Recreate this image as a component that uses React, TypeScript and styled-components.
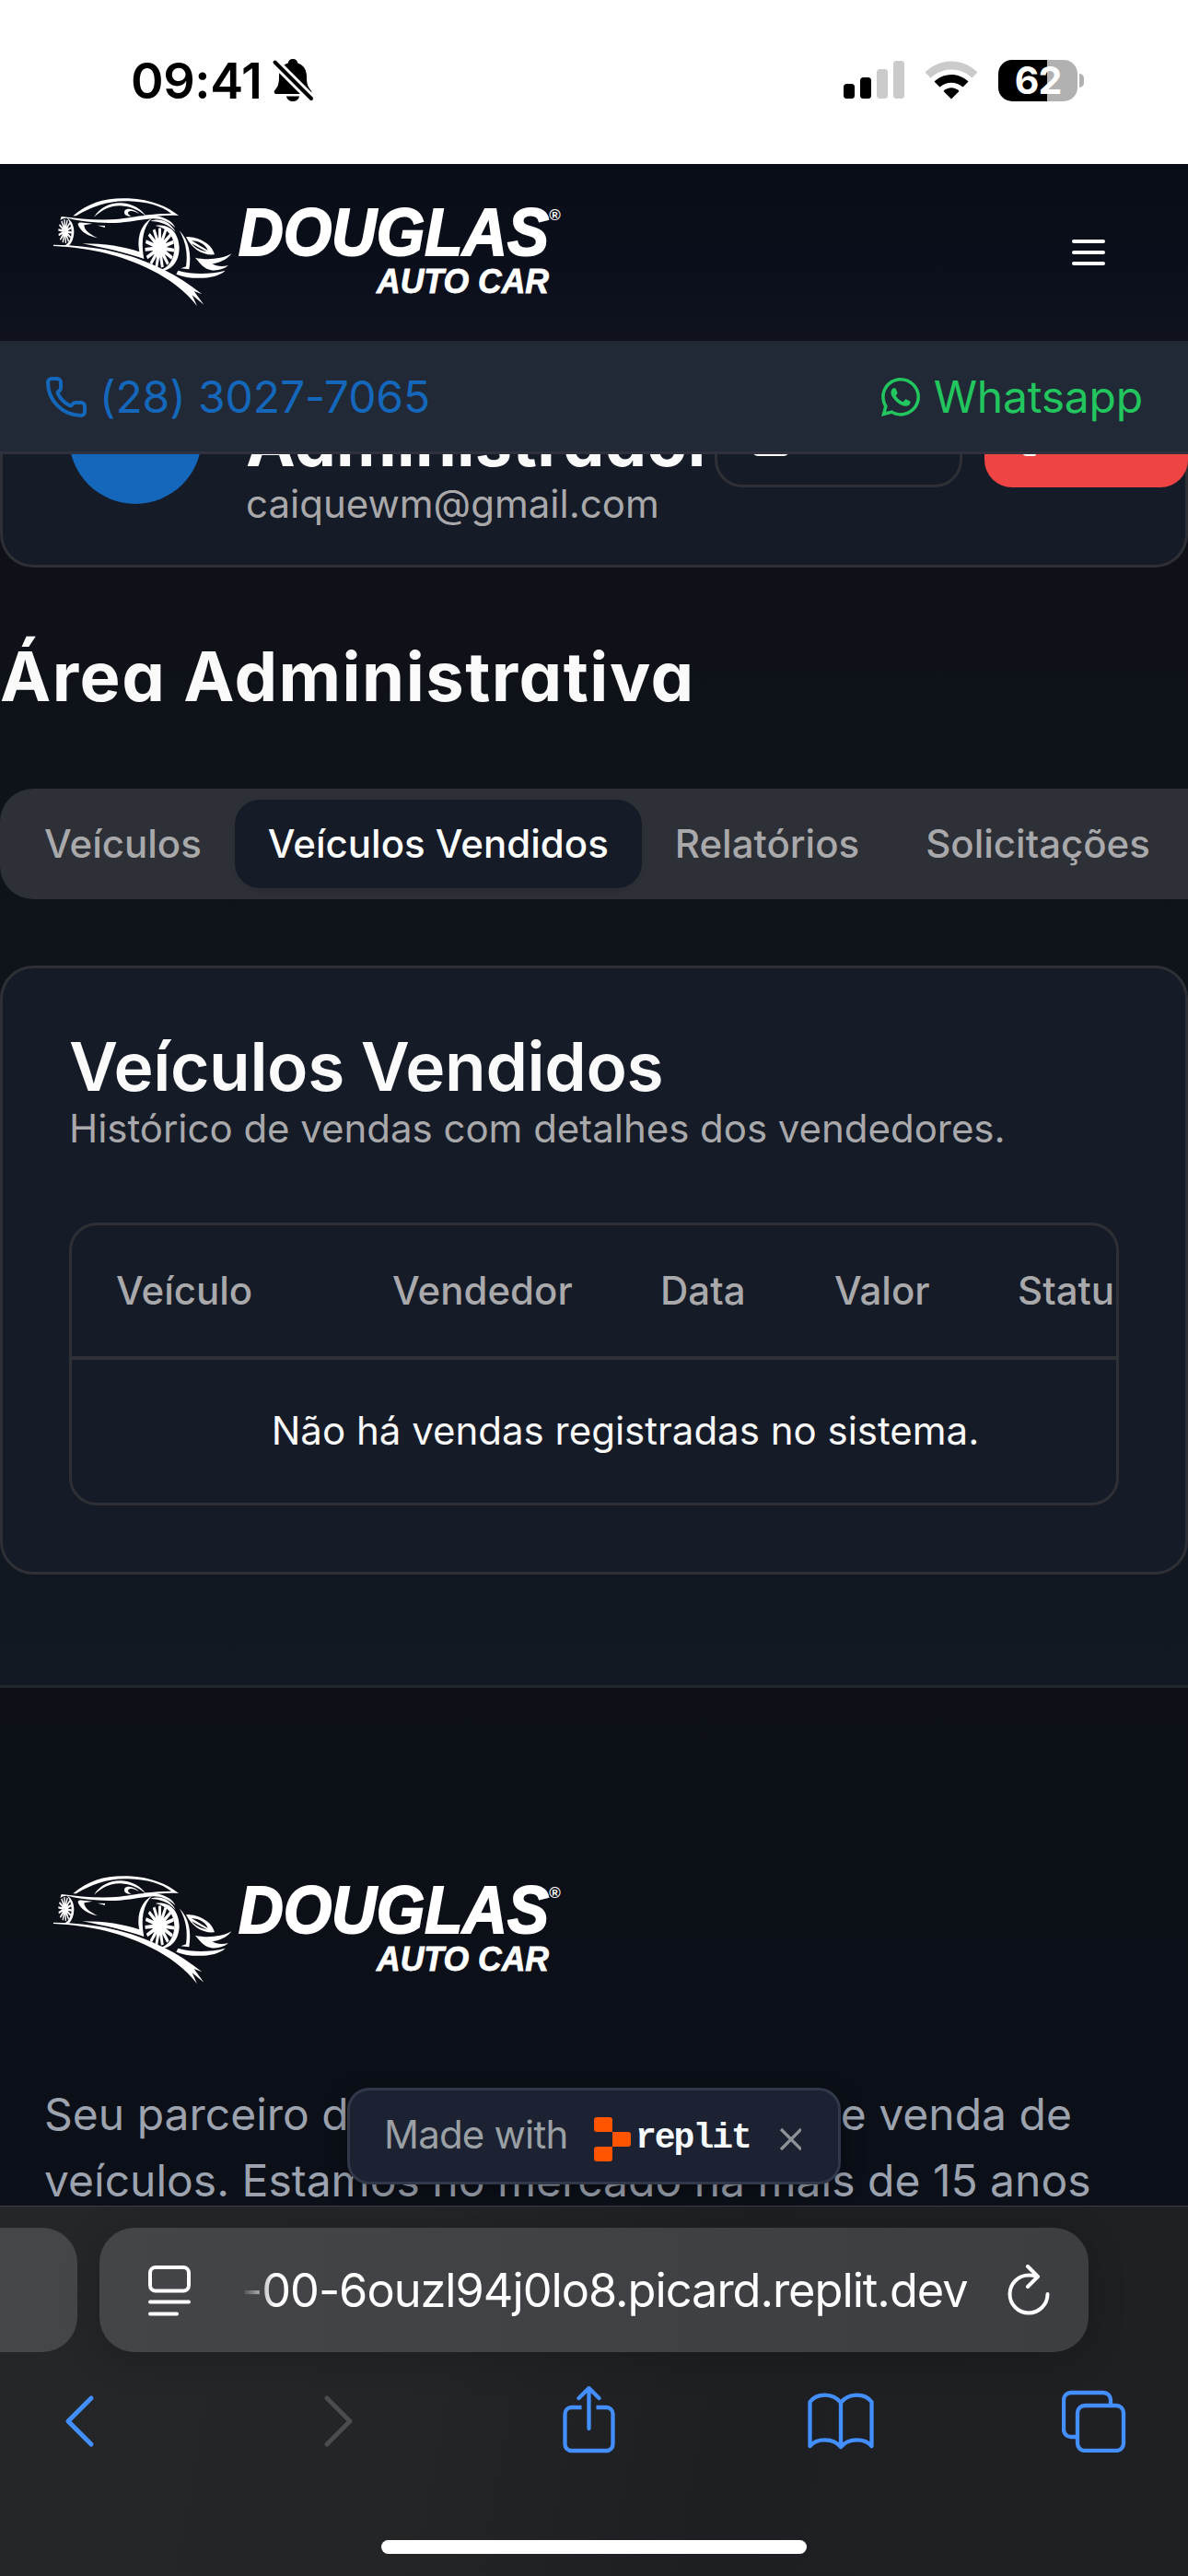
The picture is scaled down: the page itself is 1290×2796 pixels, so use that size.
import React from "react";
import styled, { createGlobalStyle } from "styled-components";
import { Phone, LogOut, Square } from "lucide-react";
import { FaWhatsapp } from "react-icons/fa";

const colors = {
  card: "#161b28",
  border: "#2e3035",
  muted: "#a9a9ab",
  text: "#fafafa",
  blue: "#1467ba",
  link: "#448fff",
};

const Global = createGlobalStyle`
  * { box-sizing: border-box; }
  body { margin: 0; background: #0f1319; font-family: Inter, "Liberation Sans", sans-serif; }
  h1, h2, p { margin: 0; }
  svg { display: block; flex: none; }
`;

const Screen = styled.div`
  width: 1290px;
  height: 2796px;
  display: flex;
  flex-direction: column;
  overflow: hidden;
`;

/* ---------- status bar ---------- */
const StatusBar = styled.div`
  height: 178px;
  flex: none;
  background: #fff;
  color: #000;
  display: flex;
  justify-content: space-between;
  padding: 57px 113px 0 142px;
`;
const StatusSide = styled.div<{ $gap: number }>`
  height: 60px;
  display: flex;
  align-items: center;
  gap: ${(p) => p.$gap}px;
`;
const Clock = styled.span`
  font-size: 54px;
  font-weight: 600;
  letter-spacing: -0.4px;
  line-height: 60px;
  width: 142px;
  margin-top: 2px;
  white-space: nowrap;
`;
const BatteryRow = styled.div`
  display: flex;
  align-items: center;
  gap: 2px;
`;
const Battery = styled.div`
  width: 86px;
  height: 45px;
  border-radius: 15px;
  background: linear-gradient(90deg, #000 53px, #b1b1b1 53px);
  color: #fff;
  font-size: 41px;
  font-weight: 700;
  letter-spacing: -1px;
  line-height: 45px;
  text-align: center;
`;
const BatteryCap = styled.div`
  width: 5px;
  height: 15px;
  border-radius: 0 5px 5px 0;
  background: #b1b1b1;
`;

/* ---------- site header ---------- */
const Header = styled.header`
  height: 192px;
  flex: none;
  display: flex;
  align-items: flex-start;
  justify-content: space-between;
  padding: 27px 84px 0 50px;
  background: linear-gradient(180deg, #090d16 0%, #0b0f1b 60%, #10131e 100%);
`;
const MenuButton = styled.button`
  display: flex;
  border: 0;
  padding: 0;
  margin-top: 45px;
  background: none;
`;
const ContactBar = styled.div`
  height: 123px;
  flex: none;
  display: flex;
  align-items: center;
  justify-content: space-between;
  padding: 2px 49px 0 48px;
  background: #212936;
  border-bottom: 3px solid #2f323e;
`;
const ContactLink = styled.a<{ $color: string; $gap: number; $spacing: number }>`
  display: flex;
  align-items: center;
  gap: ${(p) => p.$gap}px;
  color: ${(p) => p.$color};
  font-size: 48px;
  letter-spacing: ${(p) => p.$spacing}px;
  line-height: 72px;
`;

/* ---------- page ---------- */
const Viewport = styled.div`
  position: relative;
  flex: 1;
  min-height: 0;
  overflow: hidden;
  background: linear-gradient(180deg, #0e1117 0%, #0f141b 35%, #121922 70%);
`;
const UserCard = styled.section`
  margin-top: -93px;
  height: 216px;
  display: flex;
  align-items: flex-start;
  padding: 0 0 0 72px;
  background: ${colors.card};
  border: 3px solid ${colors.border};
  border-top: 0;
  border-radius: 0 0 36px 36px;
`;
const Avatar = styled.div`
  width: 144px;
  height: 144px;
  flex: none;
  margin-top: 3px;
  border-radius: 50%;
  background: ${colors.blue};
  color: #fff;
  font-size: 48px;
  line-height: 144px;
  text-align: center;
`;
const Identity = styled.div`
  width: 509px;
  flex: none;
  margin-left: 48px;
  padding-top: 32px;
  white-space: nowrap;
`;
const UserName = styled.h2`
  color: ${colors.text};
  font-size: 72px;
  font-weight: 700;
  font-feature-settings: "cv11", "ss03";
  letter-spacing: 0.3px;
  line-height: 96px;
`;
const Email = styled.p`
  color: ${colors.muted};
  font-size: 42px;
  line-height: 60px;
  margin-top: -11px;
`;
const ActionButton = styled.button<{ $danger?: boolean; $width: number }>`
  width: ${(p) => p.$width}px;
  height: 108px;
  flex: none;
  display: flex;
  align-items: center;
  gap: 18px;
  margin: 21px 24px 0 0;
  padding: 0 ${(p) => (p.$danger ? 36 : 34)}px;
  border: ${(p) => (p.$danger ? "0" : `3px solid ${colors.border}`)};
  border-radius: 30px;
  background: ${(p) => (p.$danger ? "#ef4444" : "transparent")};
  color: #fff;
  font: 500 42px/60px Inter, sans-serif;
`;
const PageTitle = styled.h1`
  margin-top: 70px;
  color: ${colors.text};
  font-size: 74px;
  font-weight: 700;
  font-feature-settings: "cv11", "ss03";
  letter-spacing: 1.5px;
  line-height: 96px;
  white-space: nowrap;
`;
const TabList = styled.nav`
  width: 1700px;
  height: 120px;
  display: flex;
  align-items: center;
  margin-top: 74px;
  padding: 12px;
  border-radius: 36px;
  background: #2e3037;
`;
const Tab = styled.button<{ $active?: boolean }>`
  height: 96px;
  padding: 0 36px;
  border: 0;
  border-radius: 27px;
  background: ${(p) => (p.$active ? colors.card : "transparent")};
  box-shadow: ${(p) => (p.$active ? "0 3px 6px rgba(0,0,0,.08)" : "none")};
  color: ${(p) => (p.$active ? "#fff" : colors.muted)};
  font: 500 42px/60px Inter, sans-serif;
  white-space: nowrap;
`;
const SalesCard = styled.section`
  margin-top: 72px;
  padding: 71px 72px 72px;
  background: ${colors.card};
  border: 3px solid ${colors.border};
  border-radius: 36px;
`;
const CardTitle = styled.h2`
  color: ${colors.text};
  font-size: 73px;
  font-weight: 600;
  font-feature-settings: "ss03";
  letter-spacing: -0.4px;
  line-height: 72px;
  white-space: nowrap;
`;
const CardText = styled.p`
  color: ${colors.muted};
  font-size: 42px;
  letter-spacing: -0.03px;
  line-height: 60px;
  margin-top: 1px;
`;
const TableFrame = styled.div`
  height: 307px;
  margin-top: 72px;
  border: 3px solid ${colors.border};
  border-radius: 30px;
  overflow: hidden;
`;
const TableHead = styled.div`
  width: 1202px;
  height: 146px;
  display: grid;
  grid-template-columns: 300px 291px 189px 199px 223px;
  align-items: center;
  padding-bottom: 1px;
  border-bottom: 4px solid ${colors.border};
`;
const HeadCell = styled.div`
  padding-left: 48px;
  color: ${colors.muted};
  font-size: 42px;
  font-weight: 500;
`;
const EmptyRow = styled.div`
  width: 1202px;
  color: ${colors.text};
  font-size: 42px;
  line-height: 154px;
  text-align: center;
`;
const Footer = styled.footer`
  height: 700px;
  margin-top: 120px;
  padding: 194px 48px 0 50px;
  border-top: 3px solid #23272e;
  background: linear-gradient(180deg, #0d1017, #0b0f18);
`;
const FooterText = styled.p`
  margin: 98px 0 0 -2px;
  color: #9ca3af;
  font-size: 48px;
  line-height: 72px;
  white-space: nowrap;
`;
const ReplitBadge = styled.div`
  position: absolute;
  left: 377px;
  bottom: 23px;
  width: 536px;
  height: 105px;
  display: flex;
  align-items: center;
  padding: 7px 0 0 37px;
  background: #1c2232;
  border: 3px solid #31384a;
  border-radius: 24px;
  box-shadow: 0 6px 24px rgba(0, 0, 0, 0.35);
`;
const BadgeLabel = styled.span`
  width: 228px;
  flex: none;
  color: #9ba0a5;
  font-size: 42px;
  letter-spacing: -0.8px;
  line-height: 48px;
  margin-top: -10px;
`;
const BadgeBrand = styled.span`
  width: 152px;
  flex: none;
  margin: -2px 0 0 5px;
  color: #f5f9fc;
  font: 700 38px/48px "Liberation Mono", monospace;
  letter-spacing: -2px;
`;

/* ---------- browser chrome ---------- */
const BrowserChrome = styled.div`
  height: 402px;
  flex: none;
  display: flex;
  flex-direction: column;
  border-top: 1px solid #3c3f42;
  background: linear-gradient(100deg, #242628 0%, #242527 35%, #1e1f22 60%, #1f2023 100%);
`;
const AddressRow = styled.div`
  display: flex;
  gap: 24px;
  margin-top: 23px;
`;
const PreviousTab = styled.div`
  width: 84px;
  height: 135px;
  border-radius: 0 38px 38px 0;
  background: #444649;
`;
const AddressBar = styled.div`
  width: 1074px;
  height: 135px;
  display: flex;
  align-items: center;
  padding: 0 41px 0 53px;
  border-radius: 38px;
  background: linear-gradient(90deg, #444549, #3d3e41);
  box-shadow: 0 6px 40px rgba(0, 0, 0, 0.18);
`;
const Url = styled.span`
  flex: 1;
  margin-left: 55px;
  color: #fff;
  font-size: 50.5px;
  letter-spacing: -1.02px;
  line-height: 72px;
  white-space: nowrap;
  -webkit-mask-image: linear-gradient(90deg, transparent 0, #000 36px);
  mask-image: linear-gradient(90deg, transparent 0, #000 36px);
`;
const ToolRow = styled.div`
  display: flex;
  align-items: center;
  justify-content: space-between;
  height: 78px;
  margin-top: 36px;
  padding: 0 66px 0 51px;
`;
const ToolButton = styled.button`
  width: 72px;
  display: flex;
  justify-content: center;
  border: 0;
  padding: 0;
  background: none;
`;
const HomeIndicator = styled.div`
  width: 462px;
  height: 15px;
  margin: 90px auto 0;
  border-radius: 8px;
  background: #fff;
`;

const spokes = (cx: number, cy: number, rx: number, ry: number, n: number) =>
  Array.from({ length: n }, (_, i) => {
    const a = (i * 2 * Math.PI) / n + 0.12;
    const w = 0.09;
    const at = (t: number, k: number) =>
      `${(cx + Math.cos(t) * rx * k).toFixed(1)} ${(cy + Math.sin(t) * ry * k).toFixed(1)}`;
    return `M${at(a - 0.6, 0.15)}L${at(a - w, 0.85)}L${at(a + w, 0.85)}L${at(a + 0.6, 0.15)}Z`;
  }).join("");

function Logo() {
  return (
    <svg width="570" height="135" viewBox="50 205 570 135" fill="#fff">
      <g transform="translate(50 205) scale(.33333)">
        <path d="M88 88C140 42 200 28 268 31C345 35 395 58 432 87C400 84 360 88 322 93L318 86C350 82 380 80 408 80C375 55 330 42 268 40C200 38 150 58 98 88Z" />
        <path d="M156 92C176 60 210 44 245 46C285 49 308 66 325 88C300 68 275 57 243 55C212 54 185 66 156 92Z" />
        <path d="M304 82C290 66 264 60 256 71C252 82 260 90 278 89C266 84 264 76 272 73C282 70 292 75 304 82Z" />
        <path d="M50 90C110 98 180 104 238 98C290 92 320 82 360 88C395 95 415 110 421 127C400 106 375 97 350 97C315 98 290 106 240 110C180 114 110 106 78 97C64 93 56 96 46 102Z" />
        <path d="M104 116C112 138 136 154 168 160C142 148 124 134 124 118L152 113L120 110C110 109 104 110 104 116ZM168 119L192 120L192 126Z" />
        <path d="M118 178C190 178 255 188 304 205C296 165 304 118 345 95C316 125 308 170 319 228C262 208 190 192 118 178Z" />
        <path d="M340 105C375 92 405 108 422 140C400 116 372 106 340 105Z" />
        <path d="M66 92C84 102 92 122 91 142C90 162 84 176 74 185L60 185C74 178 82 162 83 142C83 122 77 104 66 92Z" />
        <path d={spokes(62, 138, 26, 46, 14)} />
        <ellipse cx="65" cy="138" rx="7" ry="14" />
        <path d="M356 120C400 112 432 140 434 192C434 240 405 270 366 268C400 256 418 230 418 192C417 155 396 128 356 120Z" />
        <path d={spokes(370, 192, 56, 76, 15)} />
        <ellipse cx="370" cy="192" rx="15" ry="24" />
        <path d="M24 182C160 184 275 208 385 264C430 286 472 314 508 343L482 333L514 377L476 346L492 382C452 330 402 294 342 264C245 216 150 192 24 186Z" />
        <path d="M434 136C466 168 474 212 466 262L439 259L456 253C462 212 456 172 434 136Z" />
        <path fillRule="evenodd" d="M456 156C502 156 542 182 549 214C510 218 474 194 456 156ZM474 168L503 186L527 200C520 182 500 170 474 168ZM474 178C486 192 504 202 524 205L500 192Z" />
        <path d="M486 224C520 232 570 230 604 211C588 232 566 240 542 244C556 254 576 254 594 249C574 266 544 270 524 260C508 252 500 240 486 224Z" />
        <path d="M430 266C480 280 535 278 584 266C556 294 474 298 424 278Z" />
      </g>
      <g fontFamily="Liberation Sans, Arial, sans-serif" fontWeight="700" fontStyle="italic" stroke="#fff">
        <text x="259" y="276.500" fontSize="72" strokeWidth="2" textLength="337" lengthAdjust="spacingAndGlyphs">DOUGLAS</text>
        <text x="409" y="317.500" fontSize="36" strokeWidth=".8" textLength="187" lengthAdjust="spacingAndGlyphs">AUTO CAR</text>
        <text x="596" y="239" fontSize="17" stroke="none">®</text>
      </g>
    </svg>
  );
}

const BellOff = () => (
  <svg width="46" height="48" viewBox="0 0 46 48">
    <path d="M23 1c3 0 5 2 5.300 4.500C35 8 38 13 38 20c0 8 1 11 5 15.500 1 1.500 0 3.500-2 3.500H5c-2 0-3-2-2-3.500C7 31 8 28 8 20c0-7 3-12 9.700-14.500C18 3 20 1 23 1zM16 41.500h14c-.5 3.500-3.500 5.500-7 5.500s-6.500-2-7-5.500z" />
    <path d="M4 5L43 44" stroke="#fff" strokeWidth="10" />
    <path d="M3.500 4.500L43 44" stroke="#000" strokeWidth="4" strokeLinecap="round" />
  </svg>
);

const Signal = () => (
  <svg width="66" height="42" viewBox="0 0 66 42">
    <rect x="0" y="25" width="12" height="16" rx="3.500" />
    <rect x="18" y="18" width="12" height="23" rx="3.500" />
    <rect x="36" y="9" width="12" height="32" rx="3.500" fill="#cbcbcb" />
    <rect x="54" y="0" width="12" height="41" rx="3.500" fill="#cbcbcb" />
  </svg>
);

const Wifi = () => (
  <svg width="58" height="42" viewBox="0 0 58 42">
    <path d="M29 41.500L20.500 33C25 28 33 28 37.500 33Z" />
    <path d="M10.500 22.500C21 12.500 37 12.500 47.500 22.500L41.500 28.500C34.500 22 23.500 22 16.500 28.500Z" />
    <path d="M.5 12.500C16.500-3.500 41.500-3.500 57.500 12.500L51.500 18.500C39 6.500 19 6.500 6.500 18.500Z" fill="#cbcbcb" />
  </svg>
);

const line = { fill: "none", strokeLinecap: "round", strokeLinejoin: "round" } as const;

export default function App() {
  return (
    <Screen>
      <Global />
      <StatusBar>
        <StatusSide $gap={11}>
          <Clock>09:41</Clock>
          <BellOff />
        </StatusSide>
        <StatusSide $gap={22}>
          <Signal />
          <Wifi />
          <BatteryRow>
            <Battery>62</Battery>
            <BatteryCap />
          </BatteryRow>
        </StatusSide>
      </StatusBar>

      <Header>
        <Logo />
        <MenuButton aria-label="Menu">
          <svg width="48" height="48" viewBox="0 0 48 48" stroke="#fff" strokeWidth="4" {...line}>
            <path d="M8 12H40M8 24H40M8 36H40" />
          </svg>
        </MenuButton>
      </Header>
      <ContactBar>
        <ContactLink $color={colors.blue} $gap={12} $spacing={-0.1}>
          <Phone size={48} />
          (28) 3027-7065
        </ContactLink>
        <ContactLink $color="#22c55e" $gap={12} $spacing={-0.2}>
          <FaWhatsapp size={48} />
          Whatsapp
        </ContactLink>
      </ContactBar>

      <Viewport>
        <UserCard>
          <Avatar>C</Avatar>
          <Identity>
            <UserName>Administrador</UserName>
            <Email>caiquewm@gmail.com</Email>
          </Identity>
          <ActionButton $width={269}>
            <Square size={48} />
            Perfil
          </ActionButton>
          <ActionButton $danger $width={221}>
            <LogOut size={48} />
            Sair
          </ActionButton>
        </UserCard>

        <PageTitle>Área Administrativa</PageTitle>
        <TabList>
          <Tab>Veículos</Tab>
          <Tab $active>Veículos Vendidos</Tab>
          <Tab>Relatórios</Tab>
          <Tab>Solicitações</Tab>
        </TabList>

        <SalesCard>
          <CardTitle>Veículos Vendidos</CardTitle>
          <CardText>Histórico de vendas com detalhes dos vendedores.</CardText>
          <TableFrame>
            <TableHead>
              {["Veículo", "Vendedor", "Data", "Valor", "Status"].map((label) => (
                <HeadCell key={label}>{label}</HeadCell>
              ))}
            </TableHead>
            <EmptyRow>Não há vendas registradas no sistema.</EmptyRow>
          </TableFrame>
        </SalesCard>

        <Footer>
          <Logo />
          <FooterText>
            Seu parceiro de confiança na compra e venda de
            <br />
            veículos. Estamos no mercado há mais de 15 anos
          </FooterText>
        </Footer>

        <ReplitBadge>
          <BadgeLabel>Made with</BadgeLabel>
          <svg width="40" height="48" viewBox="0 0 40 48" fill="#ff5500">
            <path d="M3 0H17a3 3 0 0 1 3 3V16H3a3 3 0 0 1-3-3V3a3 3 0 0 1 3-3ZM20 16H37a3 3 0 0 1 3 3V29a3 3 0 0 1-3 3H20ZM3 32H20V45a3 3 0 0 1-3 3H3a3 3 0 0 1-3-3V35a3 3 0 0 1 3-3Z" />
          </svg>
          <BadgeBrand>replit</BadgeBrand>
          <svg width="28" height="28" viewBox="0 0 28 28" stroke="#8e9196" strokeWidth="3.2">
            <path d="M6 3L28 25M28 3L6 25" />
          </svg>
        </ReplitBadge>
      </Viewport>

      <BrowserChrome>
        <AddressRow>
          <PreviousTab />
          <AddressBar>
            <svg width="46" height="56" viewBox="0 0 46 56" stroke="#fff" strokeWidth="4" {...line}>
              <rect x="2" y="3" width="42" height="25.500" rx="6" />
              <path d="M2 40.500H44M2 53.500H31" />
            </svg>
            <Url>-00-6ouzl94j0lo8.picard.replit.dev</Url>
            <svg width="48" height="56" viewBox="0 0 48 56" stroke="#fff" strokeWidth="4" {...line}>
              <path d="M44.500 32A20.500 20.500 0 1 1 24 11.500Q29 11.500 33 13M23 2L34 13L23 24" />
            </svg>
          </AddressBar>
        </AddressRow>
        <ToolRow>
          <ToolButton aria-label="Voltar">
            <svg width="36" height="60" viewBox="0 0 36 60" stroke={colors.link} strokeWidth="5" {...line}>
              <path d="M30 5L5 30L30 55" />
            </svg>
          </ToolButton>
          <ToolButton aria-label="Avançar">
            <svg width="48" height="60" viewBox="-14 0 48 60" stroke="#4b4c4e" strokeWidth="5" {...line}>
              <path d="M3 5L28 30L3 55" />
            </svg>
          </ToolButton>
          <ToolButton aria-label="Compartilhar">
            <svg width="60" height="76" viewBox="-1.500 1 60 76" stroke={colors.link} strokeWidth="4.300" {...line}>
              <path strokeLinecap="butt" d="M22 24H11a7 7 0 0 0-7 7V64a7 7 0 0 0 7 7H49a7 7 0 0 0 7-7V31a7 7 0 0 0-7-7H38" />
              <path d="M30 47V3M19 14L30 3L41 14" />
            </svg>
          </ToolButton>
          <ToolButton aria-label="Favoritos">
            <svg width="72" height="64" viewBox="0 0 72 64" stroke={colors.link} strokeWidth="4.300" {...line}>
              <path d="M36 12C28 1 10 1 2.500 11V59C10 50 28 50 36 60C44 50 62 50 69.500 59V11C62 1 44 1 36 12V60" />
            </svg>
          </ToolButton>
          <ToolButton aria-label="Abas">
            <svg width="70" height="68" viewBox="1 0 70 68" stroke={colors.link} strokeWidth="4.300" {...line}>
              <path strokeLinecap="butt" d="M17 51H11a8 8 0 0 1-8-8V11a8 8 0 0 1 8-8H46a8 8 0 0 1 8 8V17" />
              <rect x="18" y="17" width="50" height="49" rx="8" />
            </svg>
          </ToolButton>
        </ToolRow>
        <HomeIndicator />
      </BrowserChrome>
    </Screen>
  );
}
